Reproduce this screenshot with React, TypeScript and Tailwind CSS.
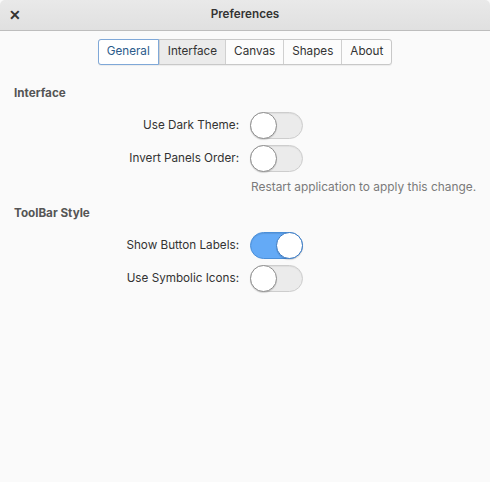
import React from "react";

function Switch({ on }: { on?: boolean }) {
  return on ? (
    <div className="relative w-[53px] h-[27px] rounded-full bg-[#64aaf6] border border-[#4a8fd9] shadow-[inset_0_1px_1px_rgba(0,0,0,0.1)]">
      <div className="absolute right-[-1px] top-[-1px] w-[27px] h-[27px] rounded-full bg-white border border-[#3a7ac4] shadow-[0_1px_1px_rgba(0,0,0,0.15)]" />
    </div>
  ) : (
    <div className="relative w-[53px] h-[27px] rounded-full bg-[#ebebeb] border border-[#cdcdcd] shadow-[inset_0_1px_1px_rgba(0,0,0,0.06)]">
      <div className="absolute left-[-1px] top-[-1px] w-[27px] h-[27px] rounded-full bg-white border border-[#8e8e8e] shadow-[0_1px_1px_rgba(0,0,0,0.15)]" />
    </div>
  );
}

function Row({ label, on }: { label: string; on?: boolean }) {
  return (
    <div className="flex items-center h-[27px]">
      <div className="w-[225px] text-right text-[11.7px] text-[#333]">{label}</div>
      <div className="ml-[11px]">
        <Switch on={on} />
      </div>
    </div>
  );
}

export default function App() {
  const tabs = ["General", "Interface", "Canvas", "Shapes", "About"];
  return (
    <div
      className="w-[490px] h-[482px] bg-[#fafafa] flex flex-col overflow-hidden"
      style={{ fontFamily: "Inter, 'Open Sans', sans-serif" }}
    >
      <div className="h-[31px] shrink-0 rounded-t-[5px] bg-gradient-to-b from-[#e9e9e9] to-[#e0e0e0] border-b border-[#bdbdbd] flex items-center relative">
        <span className="absolute left-[9px] top-[6px] text-[14px] font-bold text-[#333] leading-[18px]">✕</span>
        <div className="flex-1 text-center text-[11.7px] font-semibold text-[#333]">Preferences</div>
      </div>
      <div className="flex justify-center pt-[8px]">
        <div className="flex h-[26px] rounded-[3px] border border-[#c8c8c8] shadow-[0_1px_1px_rgba(0,0,0,0.06)] bg-[#fcfcfc] text-[11.7px] text-[#333]">
          {tabs.map((t, i) => (
            <div
              key={t}
              className={
                i === 0
                  ? "flex items-center px-[8px] -m-[1px] mr-0 rounded-l-[3px] border border-[#7fa8d8] bg-white text-[#2b5b8b]"
                  : i === 1
                  ? "flex items-center px-[8px] bg-[#ebebeb] border-l border-[#d0d0d0]"
                  : "flex items-center px-[8px] border-l border-[#d0d0d0]"
              }
            >
              {t}
            </div>
          ))}
        </div>
      </div>
      <div className="px-[14px] pt-[20px]">
        <div className="text-[11.7px] font-bold text-[#555] leading-[16px]">Interface</div>
        <div className="mt-[11px] flex flex-col gap-[6px]">
          <Row label="Use Dark Theme:" />
          <Row label="Invert Panels Order:" />
        </div>
        <div className="ml-[237px] mt-[7px] text-[11.9px] text-[#7a7a7a] leading-[16px] whitespace-nowrap">
          Restart application to apply this change.
        </div>
        <div className="mt-[10px] text-[11.7px] font-bold text-[#555] leading-[16px]">ToolBar Style</div>
        <div className="mt-[11px] flex flex-col gap-[6px]">
          <Row label="Show Button Labels:" on />
          <Row label="Use Symbolic Icons:" />
        </div>
      </div>
    </div>
  );
}
